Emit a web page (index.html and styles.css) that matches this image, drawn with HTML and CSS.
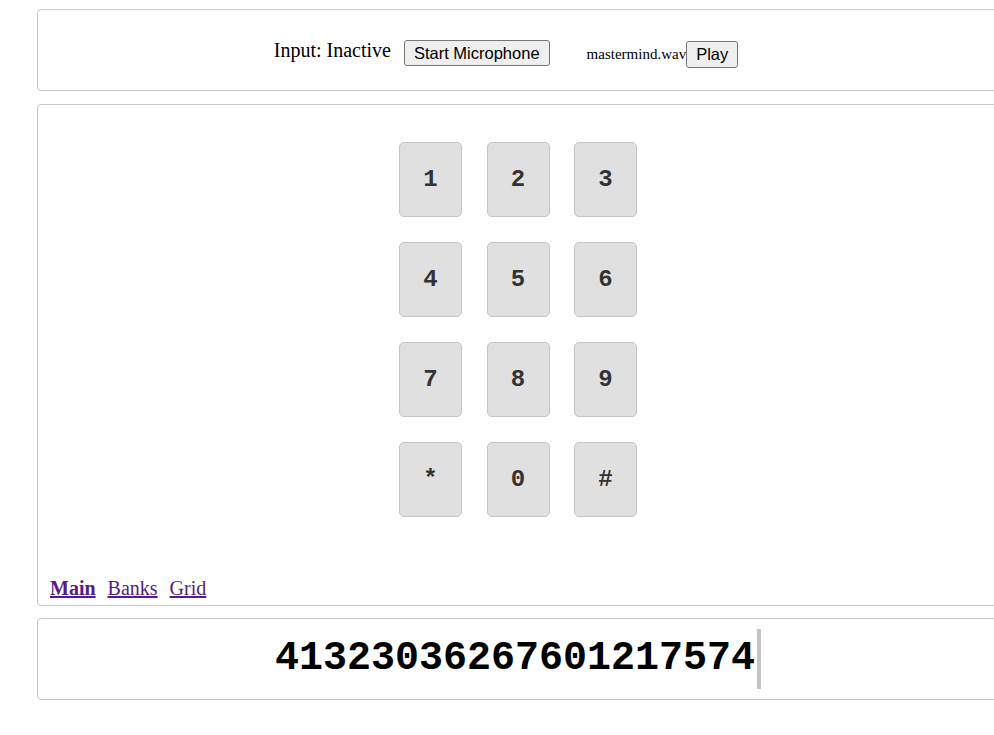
FILE: index.html
```html
<!DOCTYPE html>
<html>
<head>
<meta charset="utf-8">
<title>DTMF</title>
<link rel="stylesheet" href="styles.css">
</head>
<body>
<div class="app">
  <section class="panel controls">
    <div class="controls-row">
      <span class="status">Input: Inactive</span>
      <button class="btn btn-mic">Start Microphone</button>
      <span class="file">mastermind.wav</span>
      <button class="btn btn-play">Play</button>
    </div>
  </section>

  <section class="panel pad-panel">
    <div class="keypad">
      <button class="key">1</button>
      <button class="key">2</button>
      <button class="key">3</button>
      <button class="key">4</button>
      <button class="key">5</button>
      <button class="key">6</button>
      <button class="key">7</button>
      <button class="key">8</button>
      <button class="key">9</button>
      <button class="key">*</button>
      <button class="key">0</button>
      <button class="key">#</button>
    </div>
    <nav class="tabs">
      <a href="#" class="tab tab-active">Main</a>
      <a href="#" class="tab">Banks</a>
      <a href="#" class="tab">Grid</a>
    </nav>
  </section>

  <section class="panel output">
    <span class="digits">41323036267601217574</span>
  </section>
</div>
</body>
</html>
```

FILE: styles.css
```css
html, body {
  margin: 0;
  padding: 0;
  background: #ffffff;
  overflow-x: hidden;
}

body {
  font-family: "Liberation Serif", "Times New Roman", serif;
  color: #000;
}

.app {
  padding: 9px 0 0 37px;
  display: flex;
  flex-direction: column;
}

.panel {
  box-sizing: border-box;
  width: 962px;
  border: 1px solid #c6c6c6;
  border-radius: 4px;
  background: #fff;
}

/* top controls */
.controls {
  height: 82px;
  margin-bottom: 13px;
}

.controls-row {
  display: flex;
  justify-content: center;
  align-items: flex-start;
  padding: 29px 24px 0 0;
}

.status {
  font-size: 20px;
  line-height: 23px;
  margin-right: 13px;
}

.btn {
  font-family: "Liberation Sans", Arial, sans-serif;
  font-size: 16.5px;
  color: #000;
  background: #efefef;
  border: 1px solid #767676;
  border-radius: 3px;
  padding: 0 9px;
  margin: 0;
}

.btn-mic {
  height: 26px;
  margin-top: 1px;
  margin-right: 37px;
}

.file {
  font-size: 15px;
  line-height: 17px;
  margin-top: 7px;
}

.btn-play {
  height: 27px;
  margin-top: 2px;
  padding: 0 9px;
}

/* keypad */
.pad-panel {
  height: 502px;
  margin-bottom: 12px;
  padding: 37px 12px 0 12px;
  display: flex;
  flex-direction: column;
}

.keypad {
  align-self: center;
  display: grid;
  grid-template-columns: repeat(3, 63px);
  grid-auto-rows: 75px;
  column-gap: 24.5px;
  row-gap: 25px;
}

.key {
  font-family: "Liberation Mono", "Courier New", monospace;
  font-weight: bold;
  font-size: 24px;
  color: #333;
  background: #e0e0e0;
  border: 1px solid #c4c4c4;
  border-radius: 5px;
  padding: 0;
  margin: 0;
}

.tabs {
  margin-top: auto;
  margin-bottom: 5px;
  display: flex;
  gap: 12px;
  font-size: 20px;
  line-height: 23px;
}

.tab {
  color: #551a8b;
  text-decoration: underline;
}

.tab-active {
  font-weight: bold;
}

/* output */
.output {
  height: 82px;
  display: flex;
  align-items: center;
  justify-content: center;
}

.digits {
  font-family: "Liberation Mono", "Courier New", monospace;
  font-weight: bold;
  font-size: 40px;
  line-height: 60px;
  padding-right: 2px;
  border-right: 4px solid #c4c4c4;
}
```
